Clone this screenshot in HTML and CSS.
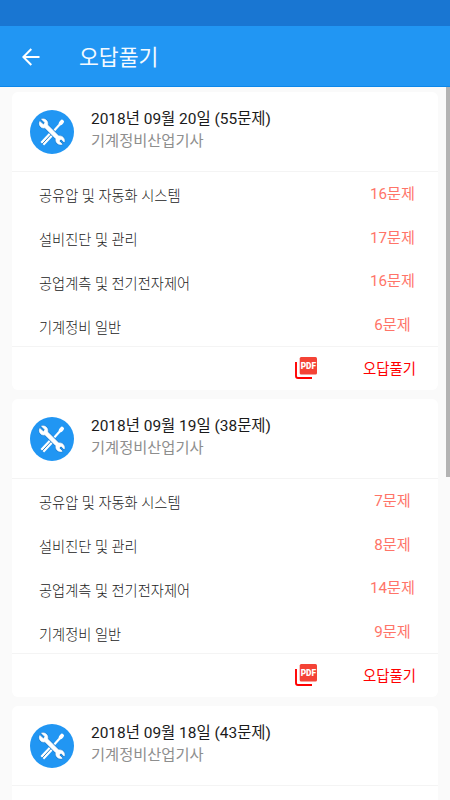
FILE: index.html
```html
<!DOCTYPE html>
<html lang="ko">
<head>
<meta charset="utf-8">
<title>오답풀기</title>
<link rel="stylesheet" href="styles.css">
</head>
<body>
<svg width="0" height="0" class="defs">
  <symbol id="tools" viewBox="0 0 44 44">
    <circle cx="22" cy="22" r="22" fill="#2196f3"/>
    <path d="M12.300 33.800 22 23.500" stroke="#fff" stroke-width="5"/>
    <path d="M12 34.200 22 23.500" stroke="#2b7fc4" stroke-width="1"/>
    <path d="M22 23 31 13" stroke="#fff" stroke-width="2.200"/>
    <path d="M30.700 13.200 32 11.700" stroke="#fff" stroke-width="4" stroke-linecap="round"/>
    <path d="M11.500 9.200 15 12.600 13.500 14.800 9.800 11.500C8.200 15 11.200 18.800 15 17.800L26 28.800C25.200 32.600 28.600 35.400 32.200 34.200L29 31 31 29 34.200 32C35.200 28.600 32.400 25.400 28.600 26L17.600 15C18.600 11 15 8 11.500 9.200Z" fill="#2383d3" stroke="#2383d3" stroke-width="2" stroke-linejoin="round"/>
    <path d="M11.500 9.200 15 12.600 13.500 14.800 9.800 11.500C8.200 15 11.200 18.800 15 17.800L26 28.800C25.200 32.600 28.600 35.400 32.200 34.200L29 31 31 29 34.200 32C35.200 28.600 32.400 25.400 28.600 26L17.600 15C18.600 11 15 8 11.500 9.200Z" fill="#fff" stroke="#fff" stroke-width=".7" stroke-linejoin="round"/>
  </symbol>
</svg>
<div class="status"></div>
<header class="bar">
  <svg class="back" viewBox="0 0 18 18"><path d="M17.500 9H1.500M9.300 1 1.300 9l8 8" fill="none" stroke="#fff" stroke-width="2"/></svg>
  <h1>오답풀기</h1>
</header>
<main class="list">
  <section class="card">
    <div class="head"><svg class="logo"><use href="#tools"/></svg><div><h2>2018년 09월 20일 (55문제)</h2><p>기계정비산업기사</p></div></div>
    <ul>
      <li><span>공유압 및 자동화 시스템</span><b>16문제</b></li>
      <li><span>설비진단 및 관리</span><b>17문제</b></li>
      <li><span>공업계측 및 전기전자제어</span><b>16문제</b></li>
      <li><span>기계정비 일반</span><b>6문제</b></li>
    </ul>
    <div class="actions">
      <svg class="pdf" viewBox="0 0 22 22"><path d="M1 5V19Q1 21 3 21H17" fill="none" stroke="#f00" stroke-width="1.900"/><rect x="4.700" width="17.300" height="17.500" rx="1.500" fill="#f44336"/><text x="5.700" y="12" textLength="15.400" lengthAdjust="spacingAndGlyphs">PDF</text></svg>
      <a>오답풀기</a>
    </div>
  </section>
  <section class="card">
    <div class="head"><svg class="logo"><use href="#tools"/></svg><div><h2>2018년 09월 19일 (38문제)</h2><p>기계정비산업기사</p></div></div>
    <ul>
      <li><span>공유압 및 자동화 시스템</span><b>7문제</b></li>
      <li><span>설비진단 및 관리</span><b>8문제</b></li>
      <li><span>공업계측 및 전기전자제어</span><b>14문제</b></li>
      <li><span>기계정비 일반</span><b>9문제</b></li>
    </ul>
    <div class="actions">
      <svg class="pdf" viewBox="0 0 22 22"><path d="M1 5V19Q1 21 3 21H17" fill="none" stroke="#f00" stroke-width="1.900"/><rect x="4.700" width="17.300" height="17.500" rx="1.500" fill="#f44336"/><text x="5.700" y="12" textLength="15.400" lengthAdjust="spacingAndGlyphs">PDF</text></svg>
      <a>오답풀기</a>
    </div>
  </section>
  <section class="card">
    <div class="head"><svg class="logo"><use href="#tools"/></svg><div><h2>2018년 09월 18일 (43문제)</h2><p>기계정비산업기사</p></div></div>
    <ul></ul>
  </section>
  <div class="scrollbar"></div>
</main>
</body>
</html>
```
FILE: styles.css
```css
* { box-sizing: border-box; margin: 0; padding: 0; }
body {
  width: 450px;
  height: 800px;
  overflow: hidden;
  display: flex;
  flex-direction: column;
  background: #fafafa;
  font-family: Roboto, "Noto Sans CJK KR", sans-serif;
  font-weight: 400;
}
.defs { position: absolute; }
.status { height: 26px; flex: none; background: #1976d2; }
.bar {
  height: 61px;
  flex: none;
  display: flex;
  align-items: center;
  padding: 2px 0 0 22px;
  background: #2196f3;
  border-bottom: 1px solid #0c87ea;
}
.back { width: 18px; height: 18px; }
.bar h1 { margin-left: 39px; padding-top: 2px; color: #f4faff; font-size: 21.6px; font-weight: 400; line-height: 30px; }
.list {
  position: relative;
  flex: 1;
  min-height: 0;
  overflow: hidden;
  display: flex;
  flex-direction: column;
  gap: 9px;
  padding: 5px 12px 0;
}
.card { height: 298px; flex: none; background: #fff; border-radius: 6px; }
.head { height: 79px; display: flex; align-items: center; padding-left: 18px; gap: 17px; }
.head div { padding-bottom: 3px; }
.logo { width: 44px; height: 44px; }
.head h2 { font-size: 15.45px; font-weight: 400; line-height: 22px; color: #1a1a1a; white-space: nowrap; }
.head p { font-size: 15.3px; font-weight: 400; line-height: 22px; color: #8e8e8e; }
ul { height: 175px; list-style: none; border-top: 1px solid #f4f4f4; padding-left: 27px; }
li { height: 43.8px; display: flex; justify-content: space-between; align-items: center; }
li span { font-size: 14.25px; font-weight: 300; color: #222; padding-top: 2px; }
li b { width: 91px; text-align: center; font-size: 15.2px; font-weight: 400; color: #ff7468; padding-bottom: 4px; }
.actions {
  height: 44px;
  display: flex;
  align-items: center;
  justify-content: flex-end;
  gap: 46px;
  padding: 0 22px 2px 0;
  border-top: 1px solid #f4f4f4;
}
.pdf { width: 22px; height: 22px; }
.pdf text { font: 900 8.8px Roboto, sans-serif; fill: #fff; }
.actions a { color: #f00; font-size: 14.4px; font-weight: 400; }
.scrollbar { position: absolute; right: 0; top: 0; width: 4px; height: 390px; background: #b3b3b3; }
```
